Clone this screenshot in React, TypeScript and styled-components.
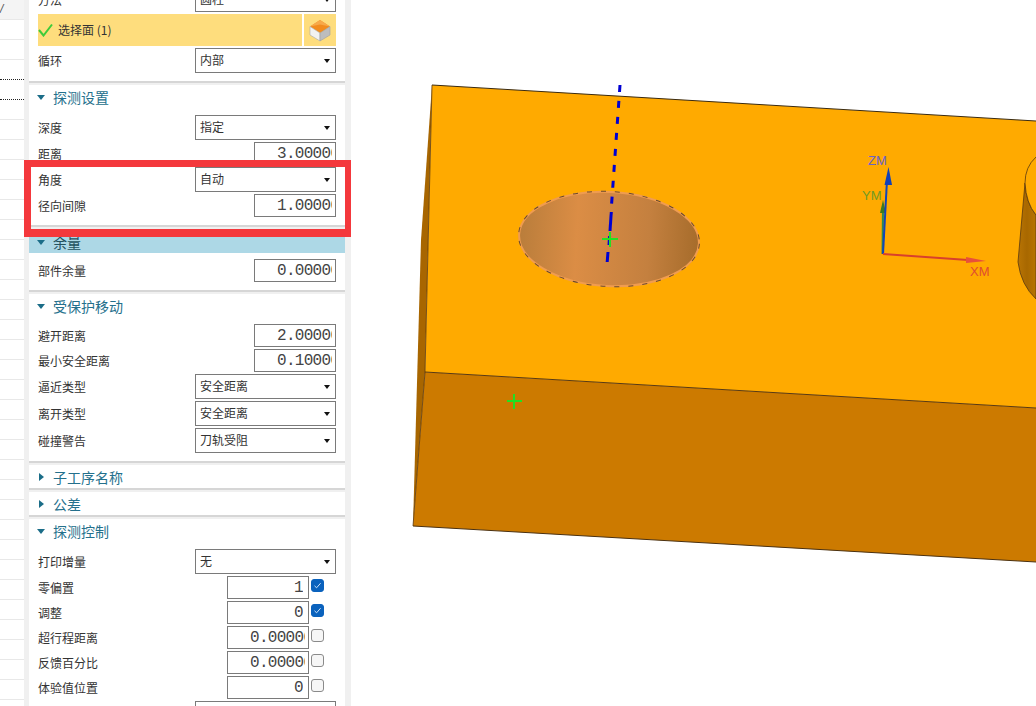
import styled, { createGlobalStyle } from "styled-components";

const GlobalStyle = createGlobalStyle`
    html, body {
        margin: 0;
        padding: 0;
        background: #fff;
    }
    body {
        font: 12px "Noto Sans CJK SC", "Liberation Sans", sans-serif;
        color: #333;
    }
`
const Page = styled.div`
    position: relative;
    display: grid;
    grid-template-columns: 24px 327px 1fr;
    width: 1036px;
    height: 706px;
    overflow: hidden;
`
const TreeColumn = styled.div`
    overflow: hidden;
    background: #fff;
`
const TreeRow = styled.div<{ $dotted?: boolean, $head?: boolean }>`
    box-sizing: border-box;
    height: 20px;
    font: italic 12px/18px "Liberation Sans", sans-serif;
    color: #555;
    background: ${props => props.$head ? "#f4f4f4" : "#fff"};
    border-bottom: 1px ${props => props.$dotted ? "dotted #222" : "solid #e8e8e8"};
`
const Panel = styled.div`
    display: flex;
    flex-direction: column;
    gap: 2px;
    box-sizing: border-box;
    height: 706px;
    padding: 0 6px 0 5px;
    background: #f0f0f0;
    overflow: hidden;
`
const Section = styled.section<{ $first?: boolean }>`
    flex: none;
    background: #fff;
    border-bottom: 2px solid #d6d6d6;
    margin-top: ${props => props.$first ? "-13px" : "0"};
`
const SectionHead = styled.div<{ $open: boolean, $active?: boolean }>`
    box-sizing: border-box;
    display: flex;
    align-items: center;
    gap: 8px;
    height: ${props => props.$open ? "30px" : "23px"};
    padding: ${props => props.$open ? "0 0 6px 8px" : "1px 0 0 8px"};
    font-size: 14px;
    color: ${props => props.$active ? "#24525f" : "#24708c"};
`
const ActiveBand = styled(SectionHead)`
    height: 24px;
    padding: 2px 0 0 8px;
    margin-bottom: 6px;
    background: #add8e6;
`
const Caret = styled.span<{ $open: boolean }>`
    flex: none;
    display: block;
    width: 0;
    height: 0;
    border: 0 solid transparent;
    ${props => props.$open
        ? `border-width: 5px 4px 0; border-top-color: #1b6d88;`
        : `border-width: 4px 0 4px 5px; border-left-color: #1b6d88; margin: 0 1px 0 2px;`}
`
const Rows = styled.div`
    display: flex;
    flex-direction: column;
    gap: 2px;
    padding: 0 9px 8px;
`
const Row = styled.div`
    display: flex;
    align-items: center;
    justify-content: space-between;
`
const Label = styled.span`
    padding-bottom: 1px;
    font-size: 12px;
    color: #333;
`
const SelectBox = styled.div`
    box-sizing: border-box;
    display: flex;
    align-items: center;
    justify-content: space-between;
    width: 141px;
    height: 25px;
    padding: 0 5px 0 4px;
    border: 1px solid #7a7a7a;
    background: #fff;
    font-size: 12px;
    color: #333;
`
const SelectText = styled.span`
    padding-bottom: 2px;
`
const SelectArrow = styled.span`
    width: 0;
    height: 0;
    border-style: solid;
    border-width: 4px 3.5px 0;
    border-color: #111 transparent transparent;
`
const NumberBox = styled.div<{ $clip?: boolean }>`
    box-sizing: border-box;
    width: 82px;
    height: 23px;
    padding: ${props => props.$clip ? "0 3px 0 22px" : "0 5px 0 0"};
    border: 1px solid #7a7a7a;
    background: #fff;
    font: 16px/22px "Liberation Mono", monospace;
    letter-spacing: -0.7px;
    color: #444;
    text-align: ${props => props.$clip ? "left" : "right"};
    white-space: nowrap;
    overflow: clip;
    overflow-clip-margin: content-box;
`
const CheckedField = styled.div`
    display: flex;
    align-items: flex-start;
    gap: 2px;
    margin-right: 12px;
`
const CheckBox = styled.span<{ $on: boolean }>`
    box-sizing: border-box;
    display: flex;
    align-items: center;
    justify-content: center;
    width: 13px;
    height: 13px;
    margin-top: 3px;
    border-radius: 3px;
    border: 1px solid ${props => props.$on ? "#0a62bd" : "#8a8a8a"};
    background: ${props => props.$on ? "#0a62bd" : "#f6f6f6"};
`
const PickRow = styled.div`
    display: grid;
    grid-template-columns: 1fr 32px;
    gap: 2px;
    height: 32px;
`
const PickLabel = styled.div`
    display: flex;
    align-items: center;
    gap: 5px;
    background: #fedd7d;
    font-size: 12px;
    color: #333;
`
const PickButton = styled.div`
    display: flex;
    align-items: center;
    justify-content: center;
    background: #fedd7d;
`
const Viewport = styled.div`
    background: #fff;
    overflow: hidden;
`
const Highlight = styled.div`
    position: absolute;
    left: 24px;
    top: 160px;
    box-sizing: border-box;
    width: 327px;
    height: 77px;
    border: solid #f4383c;
    border-width: 7px 6px 8px 7px;
    pointer-events: none;
`

function Select({ value }: { value?: string }) {
    return (
        <SelectBox>
            <SelectText>{value}</SelectText>
            <SelectArrow />
        </SelectBox>
    )
}

function SelectRow({ label, value }: { label?: string, value?: string }) {
    return (
        <Row>
            <Label>{label}</Label>
            <Select value={value} />
        </Row>
    )
}

function NumberRow({ label, value }: { label: string, value: string }) {
    return (
        <Row>
            <Label>{label}</Label>
            <NumberBox $clip>{value}</NumberBox>
        </Row>
    )
}

function CheckRow({ label, value, on, clip }: { label: string, value: string, on: boolean, clip?: boolean }) {
    return (
        <Row>
            <Label>{label}</Label>
            <CheckedField>
                <NumberBox $clip={clip}>{value}</NumberBox>
                <CheckBox $on={on}>
                    {on && (
                        <svg width="9" height="9" viewBox="0 0 9 9">
                            <path d="M1.5 4.8 L3.6 6.8 L7.6 2.2" fill="none" stroke="#cfe4fa" strokeWidth="1" />
                        </svg>
                    )}
                </CheckBox>
            </CheckedField>
        </Row>
    )
}

function Head({ title, open = true }: { title: string, open?: boolean }) {
    return (
        <SectionHead $open={open}>
            <Caret $open={open} />
            <span>{title}</span>
        </SectionHead>
    )
}

function CubeIcon() {
    return (
        <svg width="24" height="24" viewBox="0 0 24 24">
            <path d="M12 2 L22 8.5 L12 15 L2 8.5 Z" fill="#f28c1e" />
            <path d="M12 2 L22 8.5 L12 6.5 L2 8.5 Z" fill="#f7a94a" />
            <path d="M2 8.5 L12 15 L12 23 L2 17 Z" fill="#f2f2f2" stroke="#a8a8a8" strokeWidth="0.6" />
            <path d="M22 8.5 L12 15 L12 23 L22 17 Z" fill="#bdbdbd" stroke="#a0a0a0" strokeWidth="0.6" />
        </svg>
    )
}

function PartView() {
    return (
        <svg width="685" height="706" viewBox="351 0 685 706">
            <defs>
                <linearGradient id="holeWall" x1="0" y1="0" x2="1" y2="0">
                    <stop offset="0" stopColor="#b97d3b" />
                    <stop offset="0.32" stopColor="#db8d45" />
                    <stop offset="0.72" stopColor="#c4803f" />
                    <stop offset="1" stopColor="#a66c2b" />
                </linearGradient>
                <linearGradient id="bossWall" x1="0" y1="0" x2="1" y2="0">
                    <stop offset="0" stopColor="#b87404" />
                    <stop offset="0.5" stopColor="#a86800" />
                    <stop offset="1" stopColor="#b87400" />
                </linearGradient>
            </defs>

            {/* block faces */}
            <polygon points="432,85 421,240 413,526 425,372" fill="#a86600" />
            <polygon points="432,85 1036,121 1036,408 425,372" fill="#ffaa00" />
            <polygon points="425,372 1036,408 1036,562 413,526" fill="#cc7a00" />
            <path d="M413 526 L1036 562" stroke="#4a3010" strokeWidth="1" fill="none" />
            <path d="M425 372 L1036 408" stroke="#5a3a10" strokeWidth="1" fill="none" />
            <path d="M432 85 L1036 121" stroke="#3a2a10" strokeWidth="1" fill="none" />
            <path d="M432 85 L425 372 L413 526" stroke="#5a3a10" strokeWidth="0.8" fill="none" />

            {/* hole */}
            <ellipse cx="609" cy="239" rx="90" ry="47" transform="rotate(3 609 239)" fill="url(#holeWall)" stroke="#f09c50" strokeWidth="2" />
            <ellipse cx="609" cy="239" rx="90.5" ry="47.5" transform="rotate(3 609 239)" fill="none" stroke="#6b4a2a" strokeWidth="1" strokeDasharray="5 9" />

            {/* boss at the right edge */}
            <path d="M1025 183 L1018 262 Q1021 285 1036 299 L1036 215 Q1026 203 1025 183 Z" fill="url(#bossWall)" stroke="#5a3a10" strokeWidth="0.8" />
            <path d="M1036 157 Q1025 167 1025 183 Q1026 203 1036 215" fill="#ffaa00" stroke="#5a3a10" strokeWidth="0.8" />

            {/* tool axis */}
            <path d="M620 85 L611.6 204" stroke="#0000d2" strokeWidth="3" strokeDasharray="7 9" fill="none" />
            <path d="M611.3 212 L610 231" stroke="#0000d2" strokeWidth="3" fill="none" />
            <path d="M609.6 236 L609 245" stroke="#0000d2" strokeWidth="3" fill="none" />
            <path d="M608 252 L607.2 262" stroke="#0000d2" strokeWidth="3" fill="none" />
            <path d="M602 239 H618 M610 232 V247" stroke="#22e022" strokeWidth="2" fill="none" />
            <path d="M507 401 H522 M514 394 V409" stroke="#22e022" strokeWidth="2" fill="none" />

            {/* work coordinate system */}
            <path d="M882.5 254 L883 208" stroke="#2f8a50" strokeWidth="2" fill="none" />
            <path d="M883 200 L886 213 L880 213 Z" fill="#3d7a20" />
            <path d="M883 254 L887 180" stroke="#1245b8" strokeWidth="2" fill="none" />
            <path d="M888.5 167 L892 185 L884.5 185 Z" fill="#1040b8" />
            <path d="M883 254 L968 260" stroke="#d8402c" strokeWidth="2" fill="none" />
            <path d="M986 261 L966 257 L966 263 Z" fill="#e8503a" />
            <text x="868" y="165" fontFamily="Liberation Sans, sans-serif" fontSize="13" fill="#6a62c8">ZM</text>
            <text x="862" y="200" fontFamily="Liberation Sans, sans-serif" fontSize="13" fill="#6f9a24">YM</text>
            <text x="970" y="276" fontFamily="Liberation Sans, sans-serif" fontSize="13" fill="#e04d30">XM</text>
        </svg>
    )
}

export default function App() {
    const treeRows = Array.from({ length: 36 }, (_, i) => i);

    return (
        <Page>
            <GlobalStyle />
            <TreeColumn>
                <TreeRow $head>/</TreeRow>
                {treeRows.map(i => <TreeRow key={i} $dotted={i === 2 || i === 3} />)}
            </TreeColumn>

            <Panel>
                <Section $first>
                    <Rows>
                        <SelectRow label="方法" value="圆柱" />
                        <PickRow>
                            <PickLabel>
                                <svg width="15" height="14" viewBox="0 0 15 14">
                                    <path d="M1 7 L5.5 12.5 L14 1.5" fill="none" stroke="#3ecb3a" strokeWidth="2" />
                                </svg>
                                <SelectText>选择面 (1)</SelectText>
                            </PickLabel>
                            <PickButton><CubeIcon /></PickButton>
                        </PickRow>
                        <SelectRow label="循环" value="内部" />
                    </Rows>
                </Section>

                <Section>
                    <Head title="探测设置" />
                    <Rows>
                        <SelectRow label="深度" value="指定" />
                        <NumberRow label="距离" value="3.00000" />
                        <SelectRow label="角度" value="自动" />
                        <NumberRow label="径向间隙" value="1.00000" />
                    </Rows>
                </Section>

                <Section>
                    <ActiveBand $open $active>
                        <Caret $open />
                        <span>余量</span>
                    </ActiveBand>
                    <Rows>
                        <NumberRow label="部件余量" value="0.00000" />
                    </Rows>
                </Section>

                <Section>
                    <Head title="受保护移动" />
                    <Rows>
                        <NumberRow label="避开距离" value="2.00000" />
                        <NumberRow label="最小安全距离" value="0.10000" />
                        <SelectRow label="逼近类型" value="安全距离" />
                        <SelectRow label="离开类型" value="安全距离" />
                        <SelectRow label="碰撞警告" value="刀轨受阻" />
                    </Rows>
                </Section>

                <Section><Head title="子工序名称" open={false} /></Section>
                <Section><Head title="公差" open={false} /></Section>

                <Section>
                    <Head title="探测控制" />
                    <Rows>
                        <SelectRow label="打印增量" value="无" />
                        <CheckRow label="零偏置" value="1" on />
                        <CheckRow label="调整" value="0" on />
                        <CheckRow label="超行程距离" value="0.00000" on={false} clip />
                        <CheckRow label="反馈百分比" value="0.00000" on={false} clip />
                        <CheckRow label="体验值位置" value="0" on={false} />
                        <SelectRow />
                    </Rows>
                </Section>
            </Panel>

            <Viewport><PartView /></Viewport>
            <Highlight />
        </Page>
    )
}
